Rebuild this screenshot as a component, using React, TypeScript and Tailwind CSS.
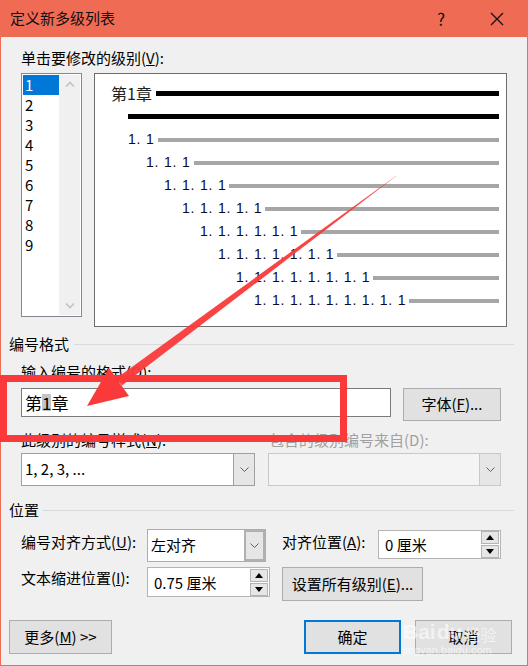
import React from "react";

const previewRows = [1, 2, 3, 4, 5, 6, 7, 8];

function Chevron({ up = false, className = "" }: { up?: boolean; className?: string }) {
  return (
    <svg width="10" height="6" viewBox="0 0 10 6" className={className}>
      <path
        d={up ? "M1 5.5 L5 1.5 L9 5.5" : "M1 0.5 L5 4.5 L9 0.5"}
        fill="none"
        stroke="currentColor"
        strokeWidth="1.6"
      />
    </svg>
  );
}

function SmallChevron() {
  return (
    <svg width="9" height="5" viewBox="0 0 9 5" className="text-[#606060]">
      <path d="M0.5 0.5 L4.5 4.5 L8.5 0.5" fill="none" stroke="currentColor" strokeWidth="1" />
    </svg>
  );
}

function Spin({ value, w, h }: { value: string; w: string; h: string }) {
  return (
    <div className={`flex items-center border border-[#b4b4b4] bg-white ${w} ${h}`}>
      <span className="flex-1 pl-[6px] text-[15px] leading-none">{value}</span>
      <div className="flex flex-col gap-[1px] pr-[1px]">
        <div className="flex h-[13px] w-[18px] items-center justify-center border border-[#b4b4b4] bg-[#e6e6e6]">
          <svg width="8" height="5" viewBox="0 0 8 5">
            <path d="M0 5 L4 0 L8 5 Z" fill="#000" />
          </svg>
        </div>
        <div className="flex h-[13px] w-[18px] items-center justify-center border border-[#b4b4b4] bg-[#e6e6e6]">
          <svg width="8" height="5" viewBox="0 0 8 5">
            <path d="M0 0 L8 0 L4 5 Z" fill="#000" />
          </svg>
        </div>
      </div>
    </div>
  );
}

export default function App() {
  return (
    <div className="relative h-[666px] w-[528px] overflow-hidden bg-[#f06b54] px-[1px] pb-[1px] font-['Noto_Sans_CJK_SC','Noto_Sans',sans-serif] text-black">
      {/* title bar */}
      <div className="flex h-[37px] items-center pl-[9px] text-[15px] text-[#111]">
        <span>定义新多级列表</span>
        <span className="ml-auto mr-[45px] text-[17px]">?</span>
        <svg width="14" height="14" viewBox="0 0 14 14" className="mr-[23px]">
          <path d="M1 1 L13 13 M13 1 L1 13" stroke="#111" strokeWidth="1.3" />
        </svg>
      </div>

      <div className="h-[628px] bg-[#f0f0f0] text-[15px]">
        <div className="pl-[20px] pt-[12px] leading-[18px]">
          单击要修改的级别(<u>V</u>):
        </div>

        <div className="mt-[6px] flex items-start">
          {/* level list */}
          <div className="ml-[20px] flex h-[244px] w-[61px] border border-[#828790] bg-white p-[1px]">
            <div className="w-[36px]">
              {[1, 2, 3, 4, 5, 6, 7, 8, 9].map((n) => (
                <div
                  key={n}
                  className={`h-[20px] pl-[2px] leading-[20px] ${n === 1 ? "bg-[#0078d7] text-white" : ""}`}
                >
                  {n}
                </div>
              ))}
            </div>
            <div className="flex flex-1 flex-col items-center justify-between bg-[#f0f0f0] py-[6px] text-[#c2c2c2]">
              <Chevron up />
              <Chevron />
            </div>
          </div>

          {/* preview */}
          <div className="ml-[12px] h-[254px] w-[413px] border border-[#6d6d6d] bg-white pt-[7px] pr-[7px]">
            <div className="flex h-[23px] items-center pl-[16px]">
              <span className="text-[16px] leading-none text-[#222]">第1章</span>
              <div className="ml-[4px] mt-[2px] h-[5px] flex-1 bg-black" />
            </div>
            <div className="flex h-[23px] items-center pl-[33px]">
              <div className="mt-[2px] h-[5px] flex-1 bg-black" />
            </div>
            {previewRows.map((k) => (
              <div
                key={k}
                className="flex h-[23px] items-center"
                style={{ paddingLeft: 33 + 18 * (k - 1) }}
              >
                <span className="whitespace-pre font-['Liberation_Sans',sans-serif] text-[14px] leading-none tracking-[0.8px] text-[#0a0a2a]">
                  {Array(k + 1).fill("1").join(". ")}
                </span>
                <div className="ml-[3px] mt-[3px] h-[4px] flex-1 bg-[#a6a6a6]" />
              </div>
            ))}
          </div>
        </div>

        {/* 编号格式 */}
        <div className="mt-[8px] flex h-[18px] items-center pl-[8px] pr-[13px]">
          <span className="leading-[18px]">编号格式</span>
          <div className="ml-[5px] h-px flex-1 bg-[#dadada]" />
        </div>

        <div className="mt-[10px] pl-[20px] leading-[18px]">
          输入编号的格式(<u>O</u>):
        </div>

        <div className="mt-[7px] flex items-start pl-[20px]">
          <div className="flex h-[29px] w-[370px] items-center border border-[#7a7a7a] bg-white pl-[3px] text-[17px] leading-none">
            第<span className="bg-[#c4c4c4]">1</span>章
          </div>
          <div className="ml-[12px] flex h-[33px] w-[98px] items-center justify-center border border-[#adadad] bg-[#e1e1e1]">
            字体(<u>F</u>)...
          </div>
        </div>

        <div className="mt-[10px] flex pl-[20px] leading-[18px]">
          <span className="w-[248px]">
            此级别的编号样式(<u>N</u>):
          </span>
          <span className="text-[#a0a0a0]">包含的级别编号来自(D):</span>
        </div>

        <div className="mt-[4px] flex pl-[20px]">
          <div className="flex h-[33px] w-[234px] border border-[#a0a0a0] bg-white">
            <span className="flex flex-1 items-center pl-[3px]">1, 2, 3, ...</span>
            <div className="flex w-[21px] items-center justify-center border-l border-[#a0a0a0] bg-[#e6e6e6]">
              <SmallChevron />
            </div>
          </div>
          <div className="ml-[13px] flex h-[33px] w-[233px] border border-[#c8c8c8] bg-[#f4f4f4]">
            <span className="flex-1" />
            <div className="flex w-[21px] items-center justify-center border-l border-[#c8c8c8] bg-[#e6e6e6]">
              <SmallChevron />
            </div>
          </div>
        </div>

        {/* 位置 */}
        <div className="mt-[15px] flex h-[18px] items-center pl-[8px] pr-[13px]">
          <span className="leading-[18px]">位置</span>
          <div className="ml-[4px] h-px flex-1 bg-[#dadada]" />
        </div>

        <div className="mt-[10px] flex items-start pl-[20px]">
          <span className="w-[126px] pt-[4px] leading-[18px]">
            编号对齐方式(<u>U</u>):
          </span>
          <div className="flex h-[33px] w-[119px] border border-[#adadad] bg-white">
            <span className="flex flex-1 items-center pl-[3px]">左对齐</span>
            <div className="flex w-[21px] items-center justify-center border-[2px] border-[#b0b0b0] bg-[#e6e6e6]">
              <SmallChevron />
            </div>
          </div>
          <span className="ml-[16px] w-[96px] pt-[4px] leading-[18px]">
            对齐位置(<u>A</u>):
          </span>
          <div className="mt-[1px]">
            <Spin value="0 厘米" w="w-[123px]" h="h-[29px]" />
          </div>
        </div>

        <div className="mt-[5px] flex items-start pl-[20px]">
          <span className="w-[126px] pt-[2px] leading-[18px]">
            文本缩进位置(<u>I</u>):
          </span>
          <Spin value="0.75 厘米" w="w-[123px]" h="h-[30px]" />
          <div className="ml-[12px] flex h-[34px] w-[141px] items-center justify-center border border-[#adadad] bg-[#e1e1e1]">
            设置所有级别(<u>E</u>)...
          </div>
        </div>

        <div className="mt-[19px] flex items-start pl-[8px]">
          <div className="flex h-[34px] w-[103px] items-center justify-center border border-[#adadad] bg-[#e1e1e1]">
            更多(<u>M</u>) &gt;&gt;
          </div>
          <div className="ml-[192px] flex h-[34px] w-[97px] items-center justify-center border-[2px] border-[#0078d7] bg-[#e1e1e1]">
            确定
          </div>
          <div className="ml-[14px] flex h-[34px] w-[97px] items-center justify-center border border-[#adadad] bg-[#e1e1e1]">
            取消
          </div>
        </div>
      </div>

      {/* watermark */}
      <div className="pointer-events-none absolute left-[403px] top-[621px] text-white/60">
        <div className="flex items-end font-['Liberation_Sans',sans-serif] text-[21px] font-bold leading-none">
          <span>Bai</span>
          <span className="ml-[1px]">du</span>
          <span className="ml-[2px] font-['Noto_Sans_CJK_SC',sans-serif] text-[16px] font-normal">经验</span>
        </div>
        <div className="mt-[3px] font-['Liberation_Sans',sans-serif] text-[11px] leading-none">jingyan.baidu.com</div>
      </div>

      {/* red annotation box */}
      <div className="pointer-events-none absolute left-0 top-[375px] h-[67px] w-[347px] border-[7px] border-[#fa3a3a]" />

      {/* red arrow */}
      <svg className="pointer-events-none absolute left-0 top-0" width="528" height="666" viewBox="0 0 528 666">
        <polygon points="396.2,175.8 395.8,176.2 122,385.6 116,378.4" fill="#fa3a3a" opacity="0.95" />
        <polygon points="87,406 129,396 109,368" fill="#fa3a3a" />
      </svg>
    </div>
  );
}
